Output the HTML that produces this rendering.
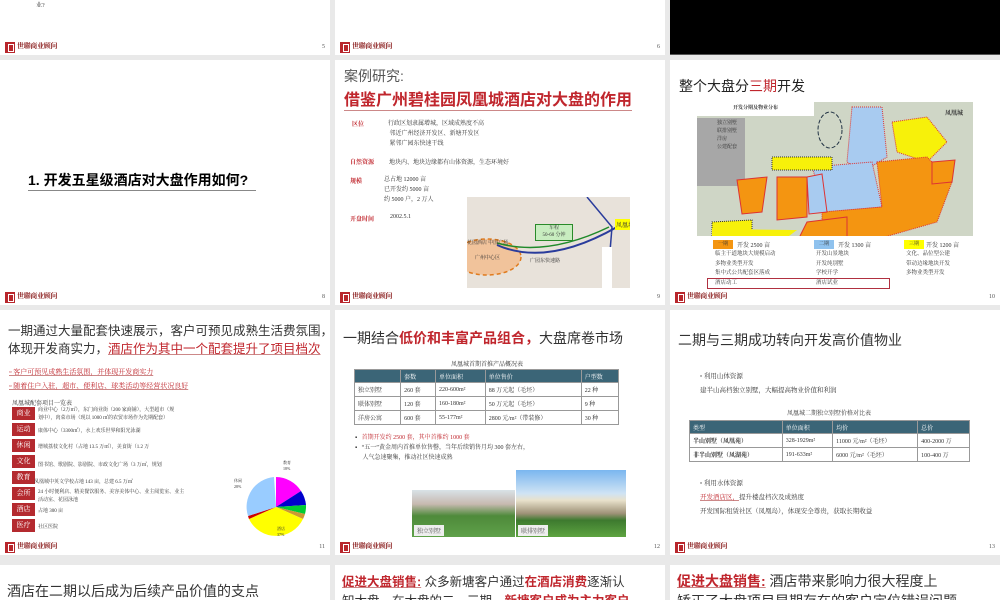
<!DOCTYPE html>
<html style="height:600px;overflow:hidden"><head><meta charset="utf-8"><style>
*{margin:0;padding:0;box-sizing:border-box}
html,body{overflow:hidden}
body{width:1000px;height:600px;background:#e9e9e9;position:relative;overflow:hidden;font-family:"Liberation Serif","Noto Serif CJK SC","Noto Sans CJK SC",serif;color:#333}
.s{position:absolute;width:330px;height:245px;background:#fff;overflow:hidden}
.a{position:absolute;white-space:nowrap}
.logo{position:absolute;left:5px;top:232px;width:10px;height:11px;background:#b8262c}
.logo:after{content:"";position:absolute;left:3px;top:2px;width:4px;height:6px;border:1px solid #fff}
.lt{position:absolute;left:17px;top:231px;font-size:7px;color:#8a1c1c;font-weight:bold;letter-spacing:-.3px}
.pn{position:absolute;right:5px;top:234px;font-size:6px;color:#555}
.red{color:#c0262d}
.ul{text-decoration:underline;text-decoration-color:#c88}
.sans{font-family:"Liberation Sans","Noto Sans CJK SC",sans-serif}
table{border-collapse:collapse;position:absolute}
td{border:1px solid #999;padding:0 3px;font-size:6px;height:14px}
th{background:#3b6577;color:#fff;font-weight:normal;font-size:6px;text-align:left;padding:0 3px;height:13px;border:1px solid #999}
.tag{position:absolute;left:12px;width:23px;height:13px;background:#b42a2f;color:#fff;font-size:7px;text-align:center;line-height:13px}
.t6{font-size:6px}
</style></head><body>

<!-- row 1 -->
<div class="s" style="left:0;top:-190px"><div class="a t6" style="left:36px;top:190px">业?</div><div class="logo"></div><div class="lt">世聯商业顾问</div><div class="pn">5</div></div>
<div class="s" style="left:335px;top:-190px"><div class="logo"></div><div class="lt">世聯商业顾问</div><div class="pn">6</div></div>
<div class="s" style="left:670px;top:-190px;background:#000;border-bottom:1px solid #555"></div>

<!-- row 2 -->
<div class="s" style="left:0;top:60px">
<div class="a sans" style="left:28px;top:110px;font-size:14px;color:#000;font-weight:bold;border-bottom:1px solid #888;padding-right:8px">1. 开发五星级酒店对大盘作用如何?</div>
<div class="logo"></div><div class="lt">世聯商业顾问</div><div class="pn">8</div></div>

<div class="s" style="left:335px;top:60px">
<div class="a sans" style="left:9px;top:6px;font-size:14px;color:#555">案例研究:</div>
<div class="a sans red" style="left:9px;top:26px;font-size:16px;font-weight:bold;border-bottom:1px solid #c88">借鉴广州碧桂园凤凰城酒店对大盘的作用</div>
<div class="a t6 red" style="left:17px;top:59px;font-weight:bold">区位</div>
<div class="a t6" style="left:53px;top:59px;line-height:10px">行政区划隶属增城，区域成熟度不高<br>&nbsp;邻近广州经济开发区、新塘开发区<br>&nbsp;紧邻广园东快速干线</div>
<div class="a t6 red" style="left:15px;top:97px;font-weight:bold">自然资源</div>
<div class="a t6" style="left:54px;top:97px">地块内、地块边缘都有山体资源，生态环境好</div>
<div class="a t6 red" style="left:15px;top:116px;font-weight:bold">规模</div>
<div class="a t6" style="left:49px;top:115px;line-height:10px">总占地 12000 亩<br>已开发约 5000 亩<br>约 5000 户，2 万人</div>
<div class="a t6 red" style="left:15px;top:154px;font-weight:bold">开盘时间</div>
<div class="a t6" style="left:55px;top:154px">2002.5.1</div>
<div class="a" style="left:132px;top:137px;width:163px;height:91px;background:#e8e2da;overflow:hidden">
<svg width="163" height="91" style="position:absolute;left:0;top:0"><ellipse cx="20" cy="60" rx="34" ry="18" fill="#f1c39b" stroke="#e07b1e" stroke-dasharray="4 3" stroke-width="1.5"/><path d="M30 48 Q80 70 150 30" stroke="#2a3c9c" stroke-width="2" fill="none"/><path d="M30 46 Q80 60 142 30" stroke="#1f8a2a" stroke-width="1.5" fill="none"/><path d="M120 0 L145 30 L140 91" stroke="#2a3c9c" stroke-width="1.5" fill="none"/><rect x="135" y="50" width="10" height="41" fill="#fff"/></svg>
<div class="a" style="left:68px;top:27px;width:38px;height:17px;background:#c8edc0;border:1px solid #2a8a2a;font-size:5px;text-align:center;line-height:7px">车程<br>50-60 分钟</div>
<div class="a" style="left:148px;top:22px;background:#ff0;font-size:6px;padding:1px">凤凰城</div>
<div class="a" style="left:0px;top:42px;font-size:5px">花园酒店 中国广场</div>
<div class="a" style="left:8px;top:57px;font-size:5px">广州中心区</div>
<div class="a" style="left:63px;top:60px;font-size:5px">广园东快速路</div>
</div>
<div class="logo"></div><div class="lt">世聯商业顾问</div><div class="pn">9</div></div>

<div class="s" style="left:670px;top:60px">
<div class="a sans" style="left:9px;top:16px;font-size:14px;color:#222">整个大盘分<span class="red">三期</span>开发</div>
<div class="a" style="left:27px;top:42px;width:276px;height:134px;background:#cfd6c6"></div>
<div class="a" style="left:27px;top:42px;width:117px;height:14px;background:#fff;font-size:5px;text-align:center;line-height:14px;font-weight:bold">开发分期及物业分布</div>
<div class="a" style="left:27px;top:58px;width:48px;height:68px;background:#a7a7a7;font-size:5px;line-height:8px;padding:2px 0 0 20px;white-space:normal">独立别墅<br>联排别墅<br>洋房<br>公建配套</div>
<svg class="a" style="left:27px;top:42px" width="276" height="134">
<path d="M155 5 L185 5 L190 55 L165 70 L150 60 Z" fill="#a8cbf0" stroke="#d33" stroke-dasharray="1 1"/>
<path d="M195 20 L230 15 L250 40 L230 60 L200 50 Z" fill="#f7f10a" stroke="#d33" stroke-dasharray="1 1"/>
<path d="M115 65 L175 60 L185 105 L130 110 Z" fill="#a8cbf0" stroke="#d33" stroke-dasharray="1 1"/>
<path d="M180 60 L230 55 L255 80 L240 120 L170 140 L125 130 L125 110 L185 105 Z" fill="#f49511" stroke="#d33" stroke-dasharray="1 1"/>
<path d="M235 60 L258 58 L255 80 L235 82 Z" fill="#f49511" stroke="#d33"/>
<path d="M80 75 L110 75 L110 115 L80 118 Z" fill="#f49511" stroke="#d33"/>
<path d="M40 78 L70 75 L65 110 L45 112 Z" fill="#f49511" stroke="#d33"/>
<path d="M110 75 L125 72 L130 110 L112 112 Z" fill="#a8cbf0" stroke="#d33"/>
<path d="M75 55 L135 55 L135 68 L75 68 Z" fill="#f7f10a" stroke="#333" stroke-dasharray="1 1"/>
<path d="M110 120 L150 115 L150 140 L100 140 Z" fill="#f49511" stroke="#d33"/>
<path d="M15 120 L55 118 L55 135 L15 135 Z" fill="#f7f10a" stroke="#333" stroke-dasharray="1 1"/>
<path d="M95 128 L100 128 L92 134 L15 134 L15 127 Z" fill="#f7f10a"/>
<ellipse cx="133" cy="28" rx="12" ry="18" fill="none" stroke="#234" stroke-dasharray="4 2"/>
</svg>
<div class="a" style="left:275px;top:48px;font-size:6px;font-weight:bold">凤凰城</div>
<div class="a" style="left:43px;top:180px;width:20px;height:9px;background:#f49511;font-size:5px;text-align:center">一期</div>
<div class="a t6" style="left:67px;top:180px">开发 2500 亩</div>
<div class="a" style="left:45px;top:190px;font-size:5.5px;line-height:9.5px">临主干道地块大规模启动<br>多物业类型开发<br>集中式公共配套区落成<br>酒店动工</div>
<div class="a" style="left:144px;top:180px;width:20px;height:9px;background:#8fc2ee;font-size:5px;text-align:center">二期</div>
<div class="a t6" style="left:168px;top:180px">开发 1300 亩</div>
<div class="a" style="left:146px;top:190px;font-size:5.5px;line-height:9.5px">开发山景地块<br>开发纯别墅<br>学校开学<br>酒店试业</div>
<div class="a" style="left:234px;top:180px;width:20px;height:9px;background:#ff0;font-size:5px;text-align:center">三期</div>
<div class="a t6" style="left:256px;top:180px">开发 1200 亩</div>
<div class="a" style="left:236px;top:190px;font-size:5.5px;line-height:9.5px">文化、品位型公建<br>带动边缘地块开发<br>多物业类型开发</div>
<div class="a" style="left:37px;top:218px;width:183px;height:11px;border:1px solid #b03040"></div>
<div class="logo"></div><div class="lt">世聯商业顾问</div><div class="pn">10</div></div>

<!-- row 3 -->
<div class="s" style="left:0;top:310px">
<div class="a sans" style="left:8px;top:12px;font-size:12.5px;line-height:18px;color:#333">一期通过大量配套快速展示，客户可预见成熟生活费氛围，并<br>体现开发商实力，<span class="red ul">酒店作为其中一个配套提升了项目档次</span></div>
<div class="a t6 red ul" style="left:9px;top:55px;font-size:7px;line-height:14px">▫ 客户可预见成熟生活氛围，并体现开发商实力<br>▫ 随着住户入驻，超市、便利店、球类活动等经营状况良好</div>
<div class="a t6" style="left:12px;top:88px">凤凰城配套项目一览表</div>
<div class="tag" style="top:97px">商业</div><div class="tag" style="top:113px">运动</div><div class="tag" style="top:129px">休闲</div><div class="tag" style="top:145px">文化</div><div class="tag" style="top:161px">教育</div><div class="tag" style="top:177px">会所</div><div class="tag" style="top:193px">酒店</div><div class="tag" style="top:209px">医疗</div>
<div class="a" style="left:38px;top:97px;font-size:5px;line-height:8px">商业中心（2万㎡），东门商业街（200 家商铺），大型超市（规<br>划中），肉菜市场（现以 1000 ㎡的农贸市场作为先期配套）</div>
<div class="a" style="left:38px;top:117px;font-size:5px">康体中心（3300㎡），水上欢乐世界和阳光泳湖</div>
<div class="a" style="left:38px;top:133px;font-size:5px">增城荔枝文化村（占地 13.5 万㎡），美食街（1.2 万</div>
<div class="a" style="left:38px;top:151px;font-size:5px">图书馆、歌剧院、影剧院、市政文化广场（3 万㎡，规划</div>
<div class="a" style="left:34px;top:168px;font-size:5px">凤凰城中英文学校占地 143 亩，总建 6.5 万㎡</div>
<div class="a" style="left:38px;top:179px;font-size:5px;line-height:8px">24 小时便利店、精美餐饮服务、美容美体中心、业主阅览室、业主<br>活动室、花园泳池</div>
<div class="a" style="left:38px;top:197px;font-size:5px">占地 300 亩</div>
<div class="a" style="left:38px;top:213px;font-size:5px">社区医院</div>
<svg class="a" style="left:243px;top:164px" width="66" height="66" viewBox="-33 -33 66 66">
<path d="M0 0 L0 -30 A30 30 0 0 1 25 -16 Z" fill="#f0f"/>
<path d="M0 0 L25 -16 A30 30 0 0 1 30 -2 Z" fill="#00c"/>
<path d="M0 0 L30 -2 A30 30 0 0 1 29 7 Z" fill="#0c3"/>
<path d="M0 0 L29 7 A30 30 0 0 1 27 12 Z" fill="#c93"/>
<path d="M0 0 L27 12 A30 30 0 0 1 -27 12 Z" fill="#ff0"/>
<path d="M0 0 L-27 12 A30 30 0 0 1 -28 9 Z" fill="#c00"/>
<path d="M0 0 L-28 9 A30 30 0 0 1 -2 -30 Z" fill="#9cf"/>
</svg>
<div class="a" style="left:234px;top:168px;font-size:4px">休闲<br>28%</div>
<div class="a" style="left:283px;top:150px;font-size:4px">教育<br>18%</div>
<div class="a" style="left:277px;top:216px;font-size:4px">酒店<br>37%</div>
<div class="logo"></div><div class="lt">世聯商业顾问</div><div class="pn">11</div></div>

<div class="s" style="left:335px;top:310px">
<div class="a sans" style="left:8px;top:18px;font-size:14px;color:#333">一期结合<span class="red" style="font-weight:bold">低价和丰富产品组合，</span>大盘席卷市场</div>
<div class="a t6" style="left:116px;top:49px">凤凰城首期首推产品概况表</div>
<table style="left:19px;top:59px;width:265px"><tr><th></th><th>套数</th><th>单位面积</th><th>单位售价</th><th>户型数</th></tr>
<tr><td>独立别墅</td><td>260 套</td><td>220-600m²</td><td>88 万元起（毛坯）</td><td>22 种</td></tr>
<tr><td>联体别墅</td><td>120 套</td><td>160-180m²</td><td>50 万元起（毛坯）</td><td>9 种</td></tr>
<tr><td>洋房公寓</td><td>600 套</td><td>55-177m²</td><td>2800 元/m²（带装修）</td><td>30 种</td></tr></table>
<div class="a" style="left:20px;top:123px;font-size:6px;line-height:10px">▪ &nbsp;&nbsp;<span class="red">首期开发约 2500 套，其中首推约 1000 套</span><br>▪ &nbsp;&nbsp;“五一”黄金周内首推单位售罄，当年后续销售月均 300 套左右，<br>&nbsp;&nbsp;&nbsp;&nbsp;&nbsp;人气急速聚集，推动社区快速成熟</div>
<div class="a" style="left:77px;top:180px;width:103px;height:47px;background:linear-gradient(#d9e2e7 0,#c7b9b0 30%,#4e8a3a 55%,#5fa14a 100%)"></div>
<div class="a" style="left:181px;top:160px;width:110px;height:67px;background:linear-gradient(#7ab6ef 0,#cfe3f4 35%,#e9e2cc 45%,#9e9277 65%,#3d7a2f 75%,#5ea440 100%)"></div>
<div class="a" style="left:79px;top:215px;background:#eee;font-size:6px;padding:1px 3px;color:#555">独立别墅</div>
<div class="a" style="left:183px;top:215px;background:#eee;font-size:6px;padding:1px 3px;color:#555">联排别墅</div>
<div class="logo"></div><div class="lt">世聯商业顾问</div><div class="pn">12</div></div>

<div class="s" style="left:670px;top:310px">
<div class="a sans" style="left:8px;top:20px;font-size:14px;color:#333">二期与三期成功转向开发高价值物业</div>
<div class="a" style="left:30px;top:60px;font-size:6.5px;line-height:14px">▫ 利用山体资源<br>建半山高档独立别墅，大幅提高物业价值和利润</div>
<div class="a t6" style="left:117px;top:98px">凤凰城二期独立别墅价格对比表</div>
<table style="left:19px;top:110px;width:281px"><tr><th>类型</th><th>单位面积</th><th>均价</th><th>总价</th></tr>
<tr><td style="font-weight:bold">半山别墅（凤凰苑）</td><td>328-1929m²</td><td>11000 元/m²（毛坯）</td><td>400-2000 万</td></tr>
<tr><td style="font-weight:bold">非半山别墅（凤湖苑）</td><td>191-633m²</td><td>6000 元/m²（毛坯）</td><td>100-400 万</td></tr></table>
<div class="a" style="left:30px;top:167px;font-size:6.5px;line-height:14px">▫ 利用水体资源<br><span class="red ul">开发酒店区，</span>提升楼盘档次及成熟度<br>开发国际租赁社区（凤凰岛），体现安全尊贵，获取长期收益</div>
<div class="logo"></div><div class="lt">世聯商业顾问</div><div class="pn">13</div></div>

<!-- row 4 -->
<div class="s" style="left:0;top:565px;height:35px"><div class="a sans" style="left:7px;top:16px;font-size:14px;color:#333">酒店在二期以后成为后续产品价值的支点</div></div>
<div class="s" style="left:335px;top:565px;height:35px"><div class="a sans" style="left:7px;top:8px;font-size:12.5px;line-height:19px;color:#333"><span class="red ul" style="font-weight:bold">促进大盘销售:</span> 众多新塘客户通过<span class="red" style="font-weight:bold">在酒店消费</span>逐渐认<br>知大盘，在大盘的二、三期，<span class="red" style="font-weight:bold">新塘客户成为主力客户</span></div></div>
<div class="s" style="left:670px;top:565px;height:35px"><div class="a sans" style="left:7px;top:6px;font-size:14px;line-height:20px;color:#333"><span class="red ul" style="font-weight:bold">促进大盘销售:</span> 酒店带来影响力很大程度上<br>矫正了大盘项目早期存在的客户定位错误问题</div></div>
</body></html>
